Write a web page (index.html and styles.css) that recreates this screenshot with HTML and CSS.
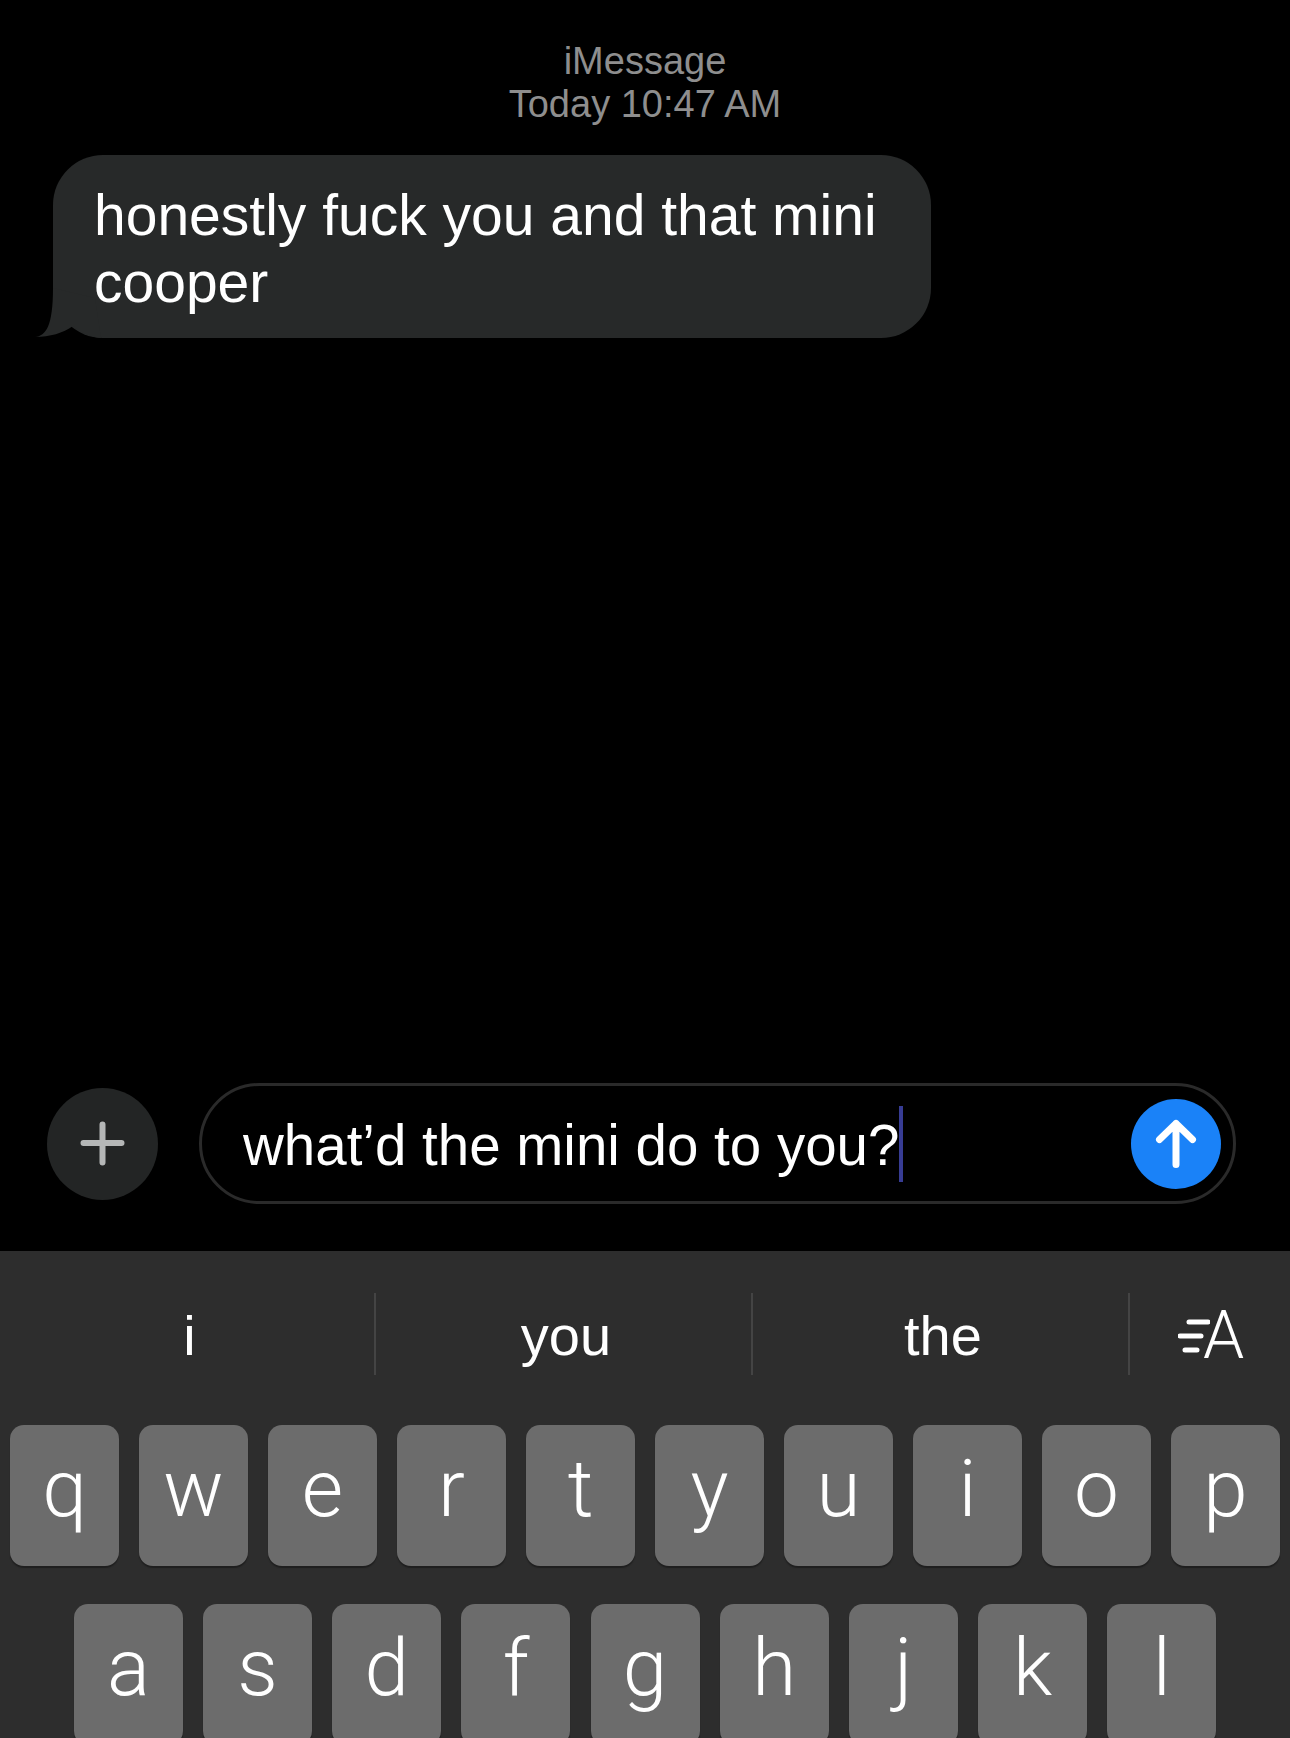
FILE: index.html
```html
<!DOCTYPE html>
<html lang="en">
<head>
<meta charset="utf-8">
<title>iMessage</title>
<link rel="stylesheet" href="styles.css">
</head>
<body>
<div class="screen">
  <main class="thread">
    <header class="meta">
      <div class="meta-line">iMessage</div>
      <div class="meta-line">Today 10:47 AM</div>
    </header>
    <div class="bubble">
      <svg class="tail" width="70" height="50" viewBox="0 0 70 50"><path d="M0 49 C11 48 18 38 18 0 L60 10 L66 50 C54 49 46 44 38 38 C28 45 15 49 0 49 Z"/></svg>
      <p class="bubble-text">honestly fuck you and that mini cooper</p>
    </div>
  </main>
  <section class="composer">
    <div class="plus">
      <svg width="46" height="46" viewBox="0 0 46 46"><path d="M22.5 3.5V41.5M3.5 22H41.5"/></svg>
    </div>
    <div class="field">
      <span class="field-text">what’d the mini do to you?</span>
      <span class="caret"></span>
      <div class="send">
        <svg width="44" height="50" viewBox="0 0 44 50"><path d="M22 45.500V4.500M5.500 20.500L22 4.500L38.500 20.500"/></svg>
      </div>
    </div>
  </section>
  <section class="keyboard">
    <div class="suggestions">
      <div class="suggestion">i</div>
      <div class="suggestion">you</div>
      <div class="suggestion">the</div>
      <div class="suggestion suggestion-icon">
        <svg class="lines" width="32" height="38" viewBox="0 0 32 38"><path d="M11 5H30M2 19H23M7 33H19"/></svg><span class="icon-a">A</span>
      </div>
    </div>
    <div class="key-row">
      <div class="key">q</div><div class="key">w</div><div class="key">e</div><div class="key">r</div><div class="key">t</div><div class="key">y</div><div class="key">u</div><div class="key">i</div><div class="key">o</div><div class="key">p</div>
    </div>
    <div class="key-row key-row-second">
      <div class="key">a</div><div class="key">s</div><div class="key">d</div><div class="key">f</div><div class="key">g</div><div class="key">h</div><div class="key">j</div><div class="key">k</div><div class="key">l</div>
    </div>
  </section>
</div>
</body>
</html>
```
FILE: styles.css
```css
* { box-sizing: border-box; }
html, body { margin: 0; padding: 0; background: #000; }
.screen {
  width: 1290px;
  height: 1738px;
  overflow: hidden;
  display: flex;
  flex-direction: column;
  background: #000;
  font-family: "Liberation Sans", Arial, sans-serif;
  color: #fff;
}
.thread { flex: 1; padding: 40px 0 0 53px; }
.meta { margin-left: -53px; text-align: center; color: #8e8e8e; font-size: 38px; }
.meta-line { line-height: 43px; }
.bubble {
  position: relative;
  width: 878px;
  height: 183px;
  margin-top: 29px;
  padding: 27px 40px 0 41px;
  background: #272929;
  border-radius: 50px;
}
.tail { position: absolute; left: -18px; bottom: 0; fill: #272929; }
.bubble-text { margin: 0; font-size: 57px; line-height: 67px; }
.composer {
  display: flex;
  align-items: center;
  gap: 41px;
  margin: 0 0 47px 47px;
}
.plus {
  width: 111px;
  height: 112px;
  display: flex;
  align-items: center;
  justify-content: center;
  border-radius: 50%;
  background: #232525;
}
.plus svg { fill: none; stroke: #b5b7b7; stroke-width: 6; stroke-linecap: round; }
.field {
  width: 1037px;
  height: 121px;
  display: flex;
  align-items: center;
  padding: 0 12px 0 41px;
  border: 3px solid #2a2a2a;
  border-radius: 61px;
}
.field-text { padding-top: 3px; font-size: 56.500px; white-space: nowrap; }
.caret { width: 4px; height: 76px; margin-left: 0; background: #373c94; }
.send {
  width: 90px;
  height: 90px;
  margin-left: auto;
  display: flex;
  align-items: center;
  justify-content: center;
  border-radius: 50%;
  background: #1a82f8;
}
.send svg { fill: none; stroke: #fff; stroke-width: 7; stroke-linecap: round; stroke-linejoin: round; }
.keyboard { flex: none; height: 487px; overflow: hidden; padding: 42px 0 0 10px; background: #2d2d2d; }
.suggestions { display: flex; height: 82px; margin: 0 0 50px -10px; }
.suggestion {
  width: 377px;
  display: flex;
  align-items: center;
  justify-content: center;
  font-size: 56px;
  padding: 2px 0 0 5px;
  border-right: 2px solid #444;
}
.suggestion:first-child { width: 376px; }
.suggestion-icon { flex: 1; border-right: none; padding: 4px 0 0 48px; justify-content: flex-start; }
.lines { flex: none; fill: none; stroke: #fff; stroke-width: 5; stroke-linecap: round; }
.icon-a {
  font-family: Roboto, "Liberation Sans", sans-serif;
  font-weight: 300;
  font-size: 66px;
  line-height: 1;
  margin-left: -7px;
}
.key-row { display: flex; gap: 20px; margin-bottom: 38px; }
.key-row-second { gap: 20.150px; margin-left: 64px; }
.key {
  flex: none;
  width: 109px;
  height: 141px;
  display: flex;
  align-items: center;
  justify-content: center;
  padding-bottom: 14px;
  border-radius: 14px;
  background: #6c6c6c;
  box-shadow: 0 2px 1px #1f1f1f;
  font-family: Roboto, "Liberation Sans", sans-serif;
  font-weight: 300;
  font-size: 80px;
  line-height: 1;
}
```
